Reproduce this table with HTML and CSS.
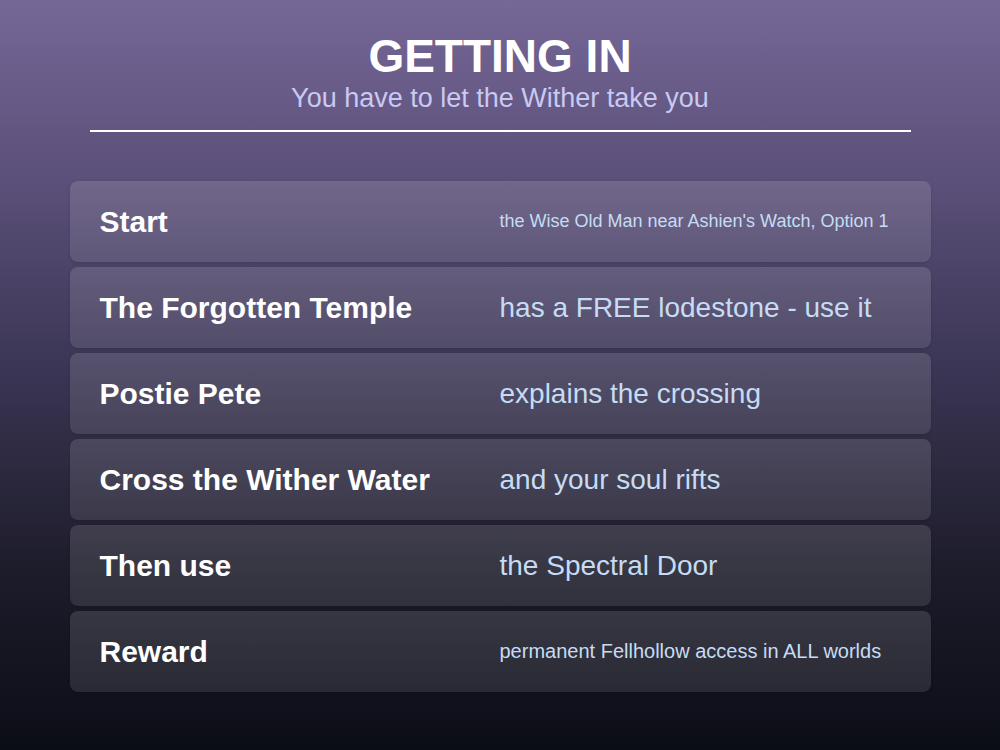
FILE: index.html
```html
<!DOCTYPE html>
<html lang="en">
<head>
  <meta charset="UTF-8" />
  <title>Getting In</title>
  <link rel="stylesheet" href="styles.css">
</head>
<body>
  <div class="page">
    <header>
      <h1>GETTING IN</h1>
      <p class="sub">You have to let the Wither take you</p>
    </header>
    <div class="steps">
      <div class="step">
        <div class="label">Start</div>
        <div class="value small">the Wise Old Man near Ashien's Watch, Option 1</div>
      </div>
      <div class="step">
        <div class="label">The Forgotten Temple</div>
        <div class="value">has a FREE lodestone - use it</div>
      </div>
      <div class="step">
        <div class="label">Postie Pete</div>
        <div class="value">explains the crossing</div>
      </div>
      <div class="step">
        <div class="label">Cross the Wither Water</div>
        <div class="value">and your soul rifts</div>
      </div>
      <div class="step">
        <div class="label">Then use</div>
        <div class="value">the Spectral Door</div>
      </div>
      <div class="step">
        <div class="label">Reward</div>
        <div class="value mid">permanent Fellhollow access in ALL worlds</div>
      </div>
    </div>
  </div>
</body>
</html>
```

FILE: styles.css
```css
html, body {
  margin: 0;
  padding: 0;
  height: 750px;
}
body {
  font-family: 'Liberation Sans', Arial, sans-serif;
  background: linear-gradient(180deg, #766797 0%, #5a4f78 25%, #3a3553 50%, #1e1d2c 75%, #0b0d16 100%);
  color: #fff;
  overflow: hidden;
}
.page {
  width: 861px;
  margin: 0 auto;
  padding-top: 30px;
}
header {
  margin: 0 20px;
  text-align: center;
  border-bottom: 2px solid #fff;
  padding-bottom: 16px;
}
h1 {
  margin: 0;
  font-size: 46px;
  line-height: 52px;
  font-weight: bold;
}
.sub {
  margin: 0;
  font-size: 27px;
  line-height: 32px;
  color: #c9c9f2;
}
.steps {
  margin-top: 49px;
  display: flex;
  flex-direction: column;
  gap: 5px;
}
.step {
  height: 81px;
  display: flex;
  align-items: center;
  padding: 0 30px;
  border-radius: 8px;
  background: linear-gradient(180deg, rgba(255, 255, 255, 0.13), rgba(255, 255, 255, 0.1));
  box-shadow: 0 1px 3px rgba(0, 0, 0, 0.15);
}
.label {
  width: 400px;
  font-size: 30px;
  font-weight: bold;
}
.value {
  flex: 1;
  font-size: 28px;
  color: #c6dcf4;
  white-space: nowrap;
}
.value.small {
  font-size: 18px;
}
.value.mid {
  font-size: 20px;
}
```
